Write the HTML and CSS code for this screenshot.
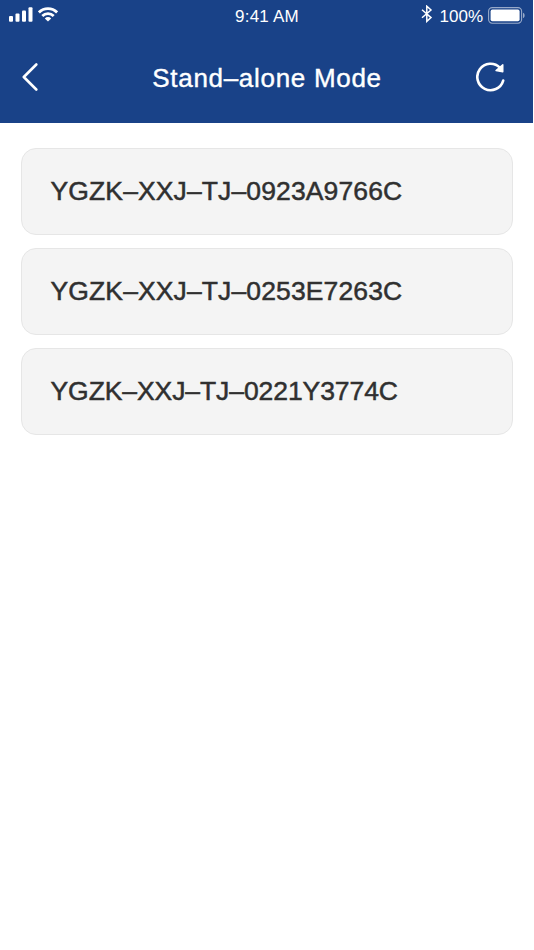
FILE: index.html
```html
<!DOCTYPE html>
<html lang="en">
<head>
  <meta charset="UTF-8">
  <meta name="viewport" content="width=device-width, initial-scale=1.0">
  <title>Stand–alone Mode</title>
  <link rel="stylesheet" href="styles.css">
</head>
<body>
  <header class="header">
    <!-- Status bar -->
    <div class="status-bar">
      <div class="status-left">
        <svg width="24" height="15" viewBox="0 0 24 15" fill="#fff">
          <rect x="0" y="9" width="4" height="5.7" rx="1"/>
          <rect x="6.5" y="6.5" width="4" height="8.2" rx="1"/>
          <rect x="13" y="3.5" width="4" height="11.2" rx="1"/>
          <rect x="19.5" y="0.3" width="4" height="14.4" rx="1"/>
        </svg>
        <svg width="20" height="15" viewBox="0 0 20 15" fill="none" stroke="#fff" stroke-width="2.8">
          <path d="M0.9 5.4a12.9 12.9 0 0 1 18.2 0"/>
          <path d="M4.3 9a8.1 8.1 0 0 1 11.4 0"/>
          <path d="M10 14.6l-3.2-3.2a4.6 4.6 0 0 1 6.4 0z" fill="#fff" stroke="none"/>
        </svg>
      </div>
      <span class="time">9:41 AM</span>
      <div class="status-right">
        <svg class="bluetooth" width="12" height="18" viewBox="0 0 12 18" fill="none" stroke="#fff" stroke-width="1.5">
          <path d="M1 4.8l9 7.8-4.2 3.8V1.2L10 5l-9 7.8"/>
        </svg>
        <span class="percent">100%</span>
        <svg class="battery" width="37" height="17" viewBox="0 0 37 17">
          <rect x="0.6" y="0.6" width="33" height="15.6" rx="3.6" fill="none" stroke="#fff" stroke-opacity="0.55" stroke-width="1.1"/>
          <rect x="2.6" y="2.6" width="29" height="11.6" rx="1.8" fill="#fff"/>
          <path d="M35 5.7c2.2 1 2.2 4.4 0 5.4z" fill="#fff" fill-opacity="0.55"/>
        </svg>
      </div>
    </div>

    <!-- Title bar -->
    <div class="title-bar">
      <a class="back" href="#" aria-label="Back">
        <svg width="16" height="28" viewBox="0 0 16 28" fill="none" stroke="#fff" stroke-width="2.6" stroke-linecap="round" stroke-linejoin="round">
          <path d="M14.3 1.5L1.8 14l12.5 12.5"/>
        </svg>
      </a>
      <h1>Stand–alone Mode</h1>
      <a class="refresh" href="#" aria-label="Refresh">
        <svg width="30" height="30" viewBox="0 0 30 30" fill="none" stroke="#fff" stroke-width="2.6" stroke-linecap="round">
          <path d="M27.2 18.6A13.2 13.2 0 1 1 24 5.8"/>
          <path d="M26.8 2.8v7l-6.8-1.2z" fill="#fff" stroke-width="1.4" stroke-linejoin="round"/>
        </svg>
      </a>
    </div>
  </header>

  <main class="device-list">
    <div class="device">YGZK–XXJ–TJ–0923A9766C</div>
    <div class="device">YGZK–XXJ–TJ–0253E7263C</div>
    <div class="device narrow">YGZK–XXJ–TJ–0221Y3774C</div>
  </main>
</body>
</html>
```
FILE: styles.css
```css
* {
  box-sizing: border-box;
}
body {
  margin: 0;
  background-color: #fff;
  font-family: "Liberation Sans", Arial, sans-serif;
}
svg {
  display: block;
}
.header {
  width: 533px;
  height: 123px;
  background-color: #194288;
  color: #fff;
}
.status-bar {
  display: grid;
  grid-template-columns: 1fr auto 1fr;
  align-items: center;
  height: 32px;
  padding: 0 8px 0 9px;
  font-size: 17px;
}
.time, .percent {
  padding-top: 2px;
}
.time {
  letter-spacing: 0.2px;
}
.status-left, .status-right {
  display: flex;
  align-items: center;
}
.status-left {
  gap: 5px;
  padding-bottom: 3px;
}
.status-right {
  justify-content: flex-end;
}
.bluetooth {
  margin: 0 7px 4px 0;
}
.percent {
  margin-right: 5px;
}
.battery {
  margin-bottom: 2px;
}
.title-bar {
  display: grid;
  grid-template-columns: 1fr auto 1fr;
  align-items: center;
  height: 91px;
  padding: 0 27px 1px 22px;
}
.title-bar h1 {
  margin: 0;
  padding: 3px 0 0 6px;
  font-size: 26px;
  font-weight: 400;
  letter-spacing: 0.7px;
  -webkit-text-stroke: 0.4px #fff;
}
.refresh {
  justify-self: end;
}
.device-list {
  display: flex;
  flex-direction: column;
  gap: 13.5px;
  padding: 25px 21px;
}
.device {
  display: flex;
  align-items: center;
  height: 86.5px;
  padding: 1px 0 0 28.5px;
  border: 1px solid #e6e6e6;
  border-radius: 15px;
  background-color: #f4f4f4;
  color: #303030;
  font-size: 26.5px;
  font-kerning: none;
  letter-spacing: 0.12px;
  -webkit-text-stroke: 0.5px #303030;
}
.narrow {
  letter-spacing: -0.08px;
}
```
